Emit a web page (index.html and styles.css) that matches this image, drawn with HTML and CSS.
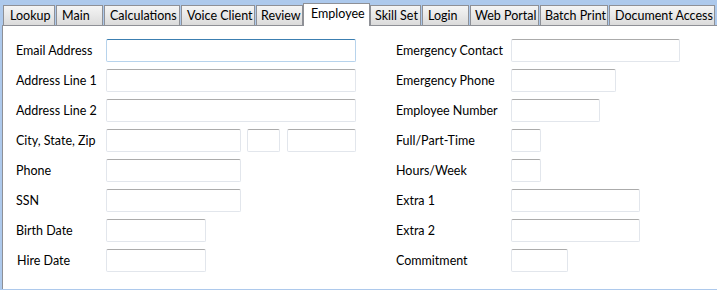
FILE: index.html
```html
<!DOCTYPE html>
<html>
<head>
<meta charset="utf-8">
<link rel="stylesheet" href="styles.css">
</head>
<body>
<div class="tabs">
  <div class="tab t-lookup">Lookup</div>
  <div class="tab t-main">Main</div>
  <div class="tab t-calc">Calculations</div>
  <div class="tab t-voice">Voice Client</div>
  <div class="tab t-review">Review</div>
  <div class="tab active t-employee">Employee</div>
  <div class="tab t-skill">Skill Set</div>
  <div class="tab t-login">Login</div>
  <div class="tab t-web">Web Portal</div>
  <div class="tab t-batch">Batch Print</div>
  <div class="tab t-doc">Document Access</div>
</div>
<div class="panel">
  <div class="col left">
    <div class="row"><label>Email Address</label><span class="field focus w250"></span></div>
    <div class="row"><label>Address Line 1</label><span class="field w250"></span></div>
    <div class="row"><label>Address Line 2</label><span class="field w250"></span></div>
    <div class="row"><label>City, State, Zip</label><span class="field w135"></span><span class="field w33 gap6"></span><span class="field w69 gap7"></span></div>
    <div class="row"><label>Phone</label><span class="field w135"></span></div>
    <div class="row"><label>SSN</label><span class="field w135"></span></div>
    <div class="row"><label>Birth Date</label><span class="field w100"></span></div>
    <div class="row"><label class="nudge">Hire Date</label><span class="field w100"></span></div>
  </div>
  <div class="col right">
    <div class="row"><label>Emergency Contact</label><span class="field w169"></span></div>
    <div class="row"><label>Emergency Phone</label><span class="field w105"></span></div>
    <div class="row"><label>Employee Number</label><span class="field w89"></span></div>
    <div class="row"><label>Full/Part-Time</label><span class="field w30"></span></div>
    <div class="row"><label>Hours/Week</label><span class="field w30"></span></div>
    <div class="row"><label>Extra 1</label><span class="field w129"></span></div>
    <div class="row"><label>Extra 2</label><span class="field w129"></span></div>
    <div class="row"><label>Commitment</label><span class="field w57"></span></div>
  </div>
</div>
</body>
</html>
```
FILE: styles.css
```css
html, body {
  margin: 0;
  padding: 0;
  height: 100%;
}
body {
  background: #adc9ec;
  font-family: Lato, "Noto Sans", sans-serif;
  font-size: 12.5px;
  color: #000;
  overflow: hidden;
}
.tabs {
  display: flex;
  align-items: flex-end;
  height: 26px;
  padding-left: 3px;
  position: relative;
  z-index: 1;
}
.tab {
  flex: none;
  height: 20px;
  line-height: 19px;
  box-sizing: border-box;
  padding-left: 5px;
  margin-right: 1px;
  margin-bottom: 1px;
  border: 1px solid #8e9096;
  border-bottom: none;
  background: linear-gradient(#f4f4f4, #e8e8e8 50%, #dbdbdb);
  white-space: nowrap;
}
.tab.active {
  height: 23px;
  margin-bottom: 0;
  margin-left: -1px;
  margin-right: 0;
  padding-left: 7px;
  background: #fff;
  line-height: 20px;
}
.t-lookup { width: 52px; padding-left: 6px; }
.t-main { width: 47px; }
.t-calc { width: 76px; }
.t-voice { width: 74px; }
.t-review { width: 47px; padding-left: 4px; }
.t-employee { width: 67px; }
.t-skill { width: 51px; padding-left: 4px; }
.t-login { width: 47px; }
.t-web { width: 69px; padding-left: 4px; }
.t-batch { width: 68px; padding-left: 4px; }
.t-doc { width: 106px; }
.panel {
  margin-left: 2px;
  margin-top: -1px;
  border-top: 1px solid #8e9096;
  border-left: 1px solid #8e9096;
  background: #fff;
  height: calc(100% - 26px);
  box-sizing: border-box;
  display: flex;
  padding-top: 13px;
}
.col {
  display: flex;
  flex-direction: column;
  gap: 7px;
}
.left {
  margin-left: 13px;
  width: 380px;
}
.row {
  display: flex;
  align-items: center;
  height: 23px;
}
.left label {
  width: 90px;
  flex: none;
}
.right label {
  width: 115px;
  flex: none;
}
.nudge {
  text-indent: 1px;
}
.field {
  display: block;
  height: 23px;
  box-sizing: border-box;
  border: 1px solid #e2e6ec;
  border-top-color: #ababab;
  border-radius: 2px;
  background: #fff;
}
.field.focus {
  border-color: #b7d3ec;
  border-top-color: #3c7fb1;
}
.gap6 { margin-left: 6px; }
.gap7 { margin-left: 7px; }
.w250 { width: 250px; }
.w135 { width: 135px; }
.w33 { width: 33px; }
.w69 { width: 69px; }
.w100 { width: 100px; }
.w169 { width: 169px; }
.w105 { width: 105px; }
.w89 { width: 89px; }
.w30 { width: 30px; }
.w129 { width: 129px; }
.w57 { width: 57px; }
```
